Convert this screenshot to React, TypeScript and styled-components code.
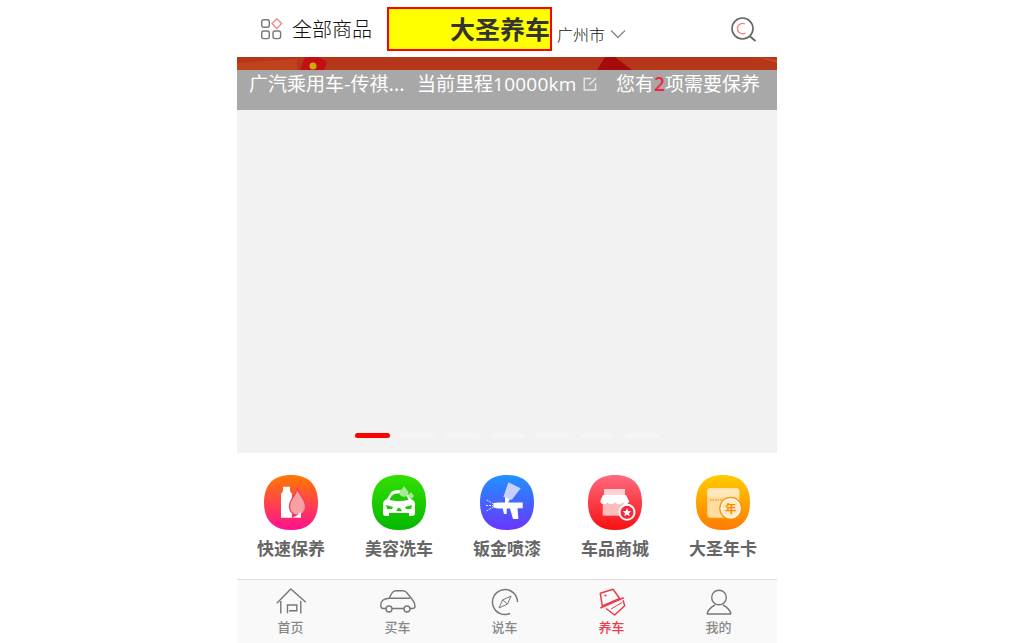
import React from "react";
import styled, { createGlobalStyle } from "styled-components";

const Global = createGlobalStyle`
  html, body { margin: 0; padding: 0; background: #fff; }
  body { font-family: "Noto Sans CJK SC", "Liberation Sans", sans-serif; }
`;
const Page = styled.div`
  width: 540px; height: 643px; margin: 0 auto; display: flex; flex-direction: column; overflow: hidden; background: #fff;
`;
const Header = styled.header`
  height: 57px; display: flex; align-items: flex-start; flex: none;
`;
const AllGoods = styled.div`
  display: flex; align-items: center; margin: 16px 0 0 23px; width: 127px; height: 24px; gap: 9px;
  font-size: 20px; font-weight: 300; color: #111; white-space: nowrap;
  & > svg { margin-top: 2px; }
`;
const Brand = styled.h1`
  margin: 7px 0 0 0; width: 165px; height: 44px; box-sizing: border-box; border: 2px solid #f00; background: #ff0;
  font-size: 25px; line-height: 38px; font-weight: 700; color: #333; text-align: right; padding-right: 0;
`;
const City = styled.div`
  display: flex; align-items: center; margin: 23px 0 0 5px; height: 22px; gap: 5px; font-size: 16px; font-weight: 300; color: #111;
`;
const SearchSlot = styled.div`
  margin: 17px 0 0 auto; padding-right: 20px; display: flex;
`;
const Strip = styled.svg`
  display: block; width: 540px; height: 13px; flex: none;
`;
const InfoBar = styled.div`
  height: 40px; flex: none; background: #a8a8a8; color: #fff; display: flex; align-items: flex-start; padding-left: 12px;
  font-size: 19px; line-height: 26px; font-weight: 400; white-space: nowrap;
`;
const Car = styled.span`
  width: 168px; flex: none;
`;
const Mileage = styled.span`
  display: flex; align-items: center; width: 199px; flex: none; gap: 6px;
`;
const Number = styled.span`
  font-family: "Open Sans", sans-serif; font-weight: 500; font-size: 19px; letter-spacing: 0.25px;
`;
const Todo = styled.span``;
const Hot = styled.span`
  color: #f4263c; font-family: "Open Sans", sans-serif; font-weight: 600;
`;
const Carousel = styled.div`
  flex: none; height: 343px; background: #f2f2f2; display: flex; justify-content: center; align-items: flex-end; gap: 10px;
  padding-bottom: 15px; box-sizing: border-box;
`;
const Dot = styled.span<{ $active?: boolean }>`
  width: 35px; height: 5px; border-radius: 3px; background: ${p => (p.$active ? "#f00" : "#f5f5f5")};
`;
const Services = styled.nav`
  flex: none; height: 126px; display: grid; grid-template-columns: repeat(5, 108px); box-sizing: border-box;
`;
const Service = styled.div`
  display: flex; flex-direction: column; align-items: center; padding-top: 22px;
  font-size: 17px; line-height: 24px; font-weight: 700; color: #666;
  & > svg { display: block; margin-bottom: 5px; }
`;
const TabBar = styled.nav`
  flex: 1; border-top: 1px solid #ddd; background: #f9f9f9; display: grid; grid-template-columns: repeat(5, 107px); box-sizing: border-box;
`;
const Tab = styled.div<{ $active?: boolean }>`
  display: flex; flex-direction: column; align-items: center; padding-top: 8px;
  font-size: 13px; line-height: 18px; color: ${p => (p.$active ? "#ec3b4c" : "#888")}; font-weight: 500;
  & > svg { display: block; margin-bottom: 2px; }
`;

const SQ = "M27 0C44 0 54 9 54 27.5C54 46 44 55 27 55C10 55 0 46 0 27.5C0 9 10 0 27 0Z";
const Squircle: React.FC<{ id: string; from: string; to: string; children: React.ReactNode }> = ({ id, from, to, children }) => (
  <svg width="54" height="56" viewBox="0 0 54 56">
    <defs>
      <linearGradient id={id} x1="0" y1="0" x2="0" y2="1">
        <stop offset="0" stopColor={from} />
        <stop offset="1" stopColor={to} />
      </linearGradient>
    </defs>
    <path d={SQ} fill={`url(#${id})`} />
    {children}
  </svg>
);

const Grid = () => (
  <svg width="23" height="23" viewBox="0 0 23 23" fill="none" strokeWidth="1.4">
    <rect x="1.7" y="1.7" width="7.6" height="7.6" rx="2" stroke="#777" />
    <rect x="1.7" y="13" width="7.6" height="7.6" rx="2" stroke="#777" />
    <rect x="13" y="13" width="7.6" height="7.6" rx="2" stroke="#777" />
    <path d="M16.8 0.8L21.6 5.6L16.8 10.4L12 5.6Z" stroke="#f08a8a" strokeLinejoin="round" />
  </svg>
);
const Chevron = () => (
  <svg width="16" height="10" viewBox="0 0 16 10" fill="none"><path d="M1 1.5L8 8.5L15 1.5" stroke="#888" strokeWidth="1.4" /></svg>
);
const Search = () => (
  <svg width="26" height="25" viewBox="0 0 26 25" fill="none">
    <circle cx="11.5" cy="11.5" r="10.5" stroke="#666" strokeWidth="1.6" />
    <path d="M18.5 19L24.5 24" stroke="#666" strokeWidth="1.8" />
    <path d="M14 7A5.2 5.2 0 1 0 14.5 16" stroke="#f58080" strokeWidth="1.3" />
  </svg>
);
const Edit = () => (
  <svg width="14" height="14" viewBox="0 0 14 14" fill="none" stroke="#e8e8e8" strokeWidth="1.4">
    <path d="M8 1.5H1.2V13H12.6V6" />
    <path d="M6 8L13 1" />
  </svg>
);

const Home = () => (
  <svg width="30" height="28" viewBox="0 0 30 28" fill="none" stroke="#777" strokeWidth="1.4">
    <path d="M0.8 15.3L14.8 1L29.8 14.3" />
    <path d="M4.8 13V25.5M24.8 13V25.5" />
    <path d="M11.5 25.3V17H20.8V22.7H13" />
  </svg>
);
const CarIcon = () => (
  <svg width="36" height="28" viewBox="0 0 36 28" fill="none" stroke="#777" strokeWidth="1.4">
    <path d="M6 20.5H3C1 20.5 0.8 19 0.8 17C0.8 13 2.5 11 9 10.3L12 5C13 3.3 14 2.8 16 2.8H23C25 2.8 26 3.5 27.5 5.5L33 12.5C35 15 35 17 35 18.5C35 20 34 20.5 32 20.5H30" />
    <path d="M12 20.5H24M9 10.3H30" />
    <circle cx="9" cy="21" r="3" />
    <circle cx="27" cy="21" r="3" />
  </svg>
);
const Compass = () => (
  <svg width="28" height="28" viewBox="0 0 28 28" fill="none" stroke="#777" strokeWidth="1.5">
    <path d="M19 25.5A12.5 12.5 0 1 1 26.5 14" />
    <path d="M20 8L16.5 16L8 20L11.5 12Z" strokeWidth="1" />
    <path d="M11.5 12L16.5 16" strokeWidth="1" />
  </svg>
);
const Tag = () => (
  <svg width="28" height="28" viewBox="0 0 28 28" fill="none" stroke="#ec3b4c" strokeWidth="1.5">
    <path d="M2.3 5.3L15 1.3L21.7 10.5L4.3 18Z" strokeLinejoin="round" />
    <circle cx="7.5" cy="7.5" r="1.1" fill="#ec3b4c" stroke="none" />
    <path d="M2.3 20L25.7 9.7" />
    <path d="M8 20.5L16.7 27L26.7 17.7L25 12.3" strokeLinejoin="round" />
    <path d="M13 21L24 14.5" strokeWidth="1" />
  </svg>
);
const User = () => (
  <svg width="26" height="28" viewBox="0 0 26 28" fill="none" stroke="#777" strokeWidth="1.4">
    <circle cx="13" cy="9.5" r="7.3" />
    <path d="M1 26C2 22 5 19 9 17M25 26C24 22 21 19 17 17M1 26H25" />
  </svg>
);

export default function App() {
  return (
    <Page>
      <Global />
      <Header>
        <AllGoods><Grid />全部商品</AllGoods>
        <Brand>大圣养车</Brand>
        <City>广州市<Chevron /></City>
        <SearchSlot><Search /></SearchSlot>
      </Header>
      <Strip viewBox="0 0 540 13">
        <rect width="540" height="13" fill="#b5371a" />
        <path d="M0 6L60 2L60 13H0Z" fill="#c0421d" />
        <path d="M68 0H82L90 5L87 13H63Z" fill="#c30f12" />
        <circle cx="76" cy="9" r="3.5" fill="#cfa80a" />
        <path d="M368 0H378L395 13H360Z" fill="#a50b0b" />
        <path d="M520 0L540 3V6Z" fill="#c94a22" />
      </Strip>
      <InfoBar>
        <Car>广汽乘用车-传祺...</Car>
        <Mileage>
          <span>当前里程<Number>10000km</Number></span>
          <Edit />
        </Mileage>
        <Todo>您有<Hot>2</Hot>项需要保养</Todo>
      </InfoBar>
      <Carousel>
        <Dot $active />
        <Dot /><Dot /><Dot /><Dot /><Dot /><Dot />
      </Carousel>
      <Services>
        <Service>
          <Squircle id="g1" from="#ff7a00" to="#ff0f92">
            <path d="M19 11.7H26V16L28 19V42.7H17V19L19 16Z" fill="#fff" />
            <path d="M33.5 14C36 21 41.6 25 41.6 31.5C41.6 36.5 38 40 33.5 40C29 40 25.5 36.5 25.5 31.5C25.5 25 31 21 33.5 14Z" fill="#f9a0a5" stroke="#f04060" strokeWidth="1.3" />
            <path d="M28 42.7H37V37L32 41Z" fill="#fff" />
          </Squircle>
          快速保养
        </Service>
        <Service>
          <Squircle id="g2" from="#33e000" to="#05b800">
            <path d="M11 29C11 26 13 25 15 24L18 19C19 16.5 22 15 27 15C32 15 35 16.5 36 19L39 24C41 25 43 26 43 29V38C43 40 42 41 40 41H37V38H17V41H14C12 41 11 40 11 38Z" fill="#fff" />
            <path d="M17.5 25C19.5 20 21 18.5 27 18.5C33 18.5 34.5 20 36.5 25C30 26.5 24 26.5 17.5 25Z" fill="#1fc905" />
            <path d="M14 30L21 32L20 34H15Z" fill="#1fc905" />
            <path d="M40 30L33 32L34 34H39Z" fill="#1fc905" />
            <path d="M24 36L26 33H28L30 36Z" fill="#1fc905" />
            <path d="M32 10.7C33.5 14 36.5 15.5 36.5 17.8C36.5 20.5 34.5 21.8 32 21.8C29.5 21.8 27.5 20.5 27.5 17.8C27.5 15.5 30.5 14 32 10.7Z" fill="#a6e89a" />
            <path d="M39 17C39.8 18.5 41.5 19.3 41.5 21C41.5 22.6 40.3 23.4 39 23.4C37.7 23.4 36.5 22.6 36.5 21C36.5 19.3 38.2 18.5 39 17Z" fill="#a6e89a" />
          </Squircle>
          美容洗车
        </Service>
        <Service>
          <Squircle id="g3" from="#1e93ff" to="#6a35ff">
            <path d="M28.4 7.3L40.7 13.3L31.7 25L23.4 21.7Z" fill="#c8d0ff" />
            <path d="M25 22L30 24L28 28H25Z" fill="#fff" />
            <path d="M13.4 28L18 27.5H42.7V33.3H37.5L38.4 44H33L30 33.5H26.7V39H24L22.7 33.5H18L13.4 32.5Z" fill="#fff" />
            <path d="M6.7 25L13 28.5M6 30.5H13M6.7 36L13 32" stroke="#e8e8ff" strokeWidth="1" strokeDasharray="2 1" />
          </Squircle>
          钣金喷漆
        </Service>
        <Service>
          <Squircle id="g4" from="#ff6a80" to="#f81010">
            <path d="M14.7 27H39V40.7H14.7Z" fill="#ffbcbc" />
            <path d="M16 14H37V20H16Z" fill="#ffd3d6" />
            <path d="M15 20H38L41 26C41 30 35.5 30 34.5 27C33.5 30 28.5 30 27 27C25.5 30 20.5 30 19.5 27C18.5 30 12.3 30 12.3 26Z" fill="#fff" />
            <circle cx="39" cy="37.3" r="7.5" fill="#f8263a" stroke="#fff" strokeWidth="2" />
            <path d="M39 33L40.2 35.9L43.3 36.2L41 38.2L41.7 41.2L39 39.6L36.3 41.2L37 38.2L34.7 36.2L37.8 35.9Z" fill="#fff" />
          </Squircle>
          车品商城
        </Service>
        <Service>
          <Squircle id="g5" from="#ffcc00" to="#ff7a00">
            <rect x="11.3" y="13.3" width="32" height="29.4" rx="3" fill="#ffdca0" />
            <path d="M11.3 22V16.3C11.3 14.3 12.3 13.3 14.3 13.3H40.3C42.3 13.3 43.3 14.3 43.3 16.3V22Z" fill="#ffe7b8" />
            <path d="M14 25H27" stroke="#ff9a20" strokeWidth="1.5" strokeDasharray="1.5 1" />
            <circle cx="34.7" cy="33.3" r="11.5" fill="#ff8e00" />
            <circle cx="34.7" cy="33.3" r="9.5" fill="#ffe9c0" stroke="#fff" strokeWidth="1.5" />
            <text x="34.7" y="37.5" textAnchor="middle" fontSize="11.5" fontWeight="700" fill="#ff8a00" fontFamily="'Noto Sans CJK SC', sans-serif">年</text>
          </Squircle>
          大圣年卡
        </Service>
      </Services>
      <TabBar>
        <Tab><Home />首页</Tab>
        <Tab><CarIcon />买车</Tab>
        <Tab><Compass />说车</Tab>
        <Tab $active><Tag />养车</Tab>
        <Tab><User />我的</Tab>
      </TabBar>
    </Page>
  );
}
